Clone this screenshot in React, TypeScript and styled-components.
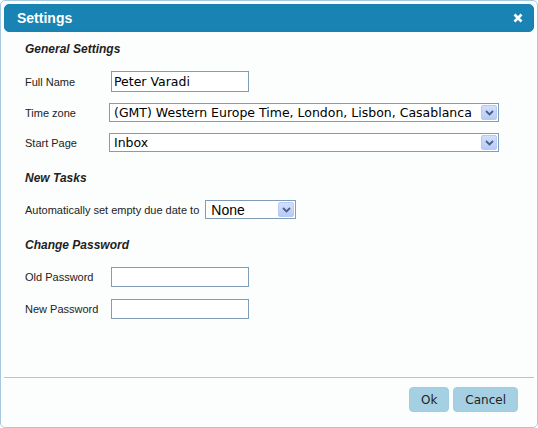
import { createGlobalStyle } from "styled-components";
import styled from "styled-components";

const GlobalStyle = createGlobalStyle`
  html, body {
    margin: 0;
    padding: 0;
    background: #ffffff;
  }
  * {
    box-sizing: border-box;
  }
`;

const Dialog = styled.div`
  width: 538px;
  height: 428px;
  border: 1px solid #a6c9e2;
  border-radius: 5px;
  padding: 3px;
  background: #fcfdfd;
  display: flex;
  flex-direction: column;
  font-family: "Liberation Sans", Arial, sans-serif;
  color: #222;
`;

const TitleBar = styled.div`
  height: 28px;
  flex: none;
  background: #1984b3;
  border: 1px solid #1a80ae;
  border-radius: 5px;
  display: flex;
  align-items: center;
  justify-content: space-between;
  padding: 0 8px 0 12px;
`;

const Title = styled.span`
  color: #ffffff;
  font-weight: bold;
  font-size: 14px;
`;

const CloseButton = styled.button`
  width: 14px;
  height: 14px;
  padding: 0;
  border: 0;
  background: none;
  display: flex;
  align-items: center;
  justify-content: center;
  cursor: pointer;
`;

const Body = styled.div`
  flex: 1;
  padding: 10px 21px 0;
  display: flex;
  flex-direction: column;
`;

const SectionHeading = styled.div<{ $top: number }>`
  margin-top: ${(p) => p.$top}px;
  font-size: 12px;
  line-height: 14px;
  font-weight: bold;
  font-style: italic;
  color: #1f1f1f;
`;

const Row = styled.div<{ $top: number }>`
  margin-top: ${(p) => p.$top}px;
  display: flex;
  align-items: center;
`;

// fixed column for the form labels, or natural width with a small gap
const FieldLabel = styled.label<{ $width?: number }>`
  width: ${(p) => (p.$width ? `${p.$width}px` : "auto")};
  margin-right: ${(p) => (p.$width ? 0 : 6)}px;
  flex: none;
  font-size: 11px;
  color: #222;
`;

const TextInput = styled.input<{ $height: number }>`
  width: 138px;
  height: ${(p) => p.$height}px;
  margin-left: 2px;
  border: 1px solid #7f9db9;
  padding: 0 2px;
  background: #ffffff;
  font-family: "DejaVu Sans", Verdana, sans-serif;
  font-size: 12.5px;
  color: #000;
  outline: none;
`;

const Combo = styled.div<{ $width: number; $small?: boolean }>`
  width: ${(p) => p.$width}px;
  height: 19px;
  border: 1px solid #7f9db9;
  background: #ffffff;
  display: flex;
  align-items: center;
  padding: 0 1px 0 ${(p) => (p.$small ? 5 : 4)}px;
  font-family: ${(p) =>
    p.$small ? '"Liberation Sans", Arial, sans-serif' : '"DejaVu Sans", Verdana, sans-serif'};
  font-size: ${(p) => (p.$small ? 14 : 12.5)}px;
  color: #000;
`;

const ComboText = styled.span`
  flex: 1;
  white-space: nowrap;
  overflow: hidden;
`;

const ComboArrow = styled.span`
  width: 16px;
  height: 15px;
  flex: none;
  border: 1px solid #b7c9f4;
  border-radius: 2px;
  background: linear-gradient(#d3e0fd, #b6cbf6);
  display: flex;
  align-items: center;
  justify-content: center;
`;

const Footer = styled.div`
  flex: none;
  border-top: 1px solid #a6c9e2;
  padding: 9px 16px 12px 0;
  display: flex;
  justify-content: flex-end;
  gap: 4px;
`;

const Button = styled.button`
  height: 25px;
  padding: 0 11px;
  border: 1px solid #9fcde2;
  border-radius: 4px;
  background: #a5d0e4;
  font-family: "DejaVu Sans", Verdana, sans-serif;
  font-size: 12px;
  color: #222;
  cursor: pointer;
`;

const Chevron = () => (
  <svg width="9" height="6" viewBox="0 0 9 6">
    <path d="M1 1 L4.5 4.5 L8 1" fill="none" stroke="#4b5f86" strokeWidth="1.8" />
  </svg>
);

const Select = ({ value, width, small }: { value: string; width: number; small?: boolean }) => (
  <Combo $width={width} $small={small} role="combobox">
    <ComboText>{value}</ComboText>
    <ComboArrow>
      <Chevron />
    </ComboArrow>
  </Combo>
);

export default function App() {
  return (
    <>
      <GlobalStyle />
      <Dialog>
        <TitleBar>
          <Title>Settings</Title>
          <CloseButton aria-label="close">
            <svg width="10" height="10" viewBox="0 0 10 10">
              <path d="M1.5 1.5 L8.5 8.5 M8.5 1.5 L1.5 8.5" stroke="#ffffff" strokeWidth="2.6" />
            </svg>
          </CloseButton>
        </TitleBar>
        <Body>
          <SectionHeading $top={0}>General Settings</SectionHeading>
          <Row $top={15}>
            <FieldLabel $width={84}>Full Name</FieldLabel>
            <TextInput $height={21} defaultValue="Peter Varadi" />
          </Row>
          <Row $top={11}>
            <FieldLabel $width={84}>Time zone</FieldLabel>
            <Select value="(GMT) Western Europe Time, London, Lisbon, Casablanca" width={390} />
          </Row>
          <Row $top={11}>
            <FieldLabel $width={84}>Start Page</FieldLabel>
            <Select value="Inbox" width={390} />
          </Row>

          <SectionHeading $top={19}>New Tasks</SectionHeading>
          <Row $top={15}>
            <FieldLabel>Automatically set empty due date to</FieldLabel>
            <Select value="None" width={91} small />
          </Row>

          <SectionHeading $top={19}>Change Password</SectionHeading>
          <Row $top={15}>
            <FieldLabel $width={84}>Old Password</FieldLabel>
            <TextInput $height={20} type="password" />
          </Row>
          <Row $top={12}>
            <FieldLabel $width={84}>New Password</FieldLabel>
            <TextInput $height={20} type="password" />
          </Row>
        </Body>
        <Footer>
          <Button>Ok</Button>
          <Button>Cancel</Button>
        </Footer>
      </Dialog>
    </>
  );
}
